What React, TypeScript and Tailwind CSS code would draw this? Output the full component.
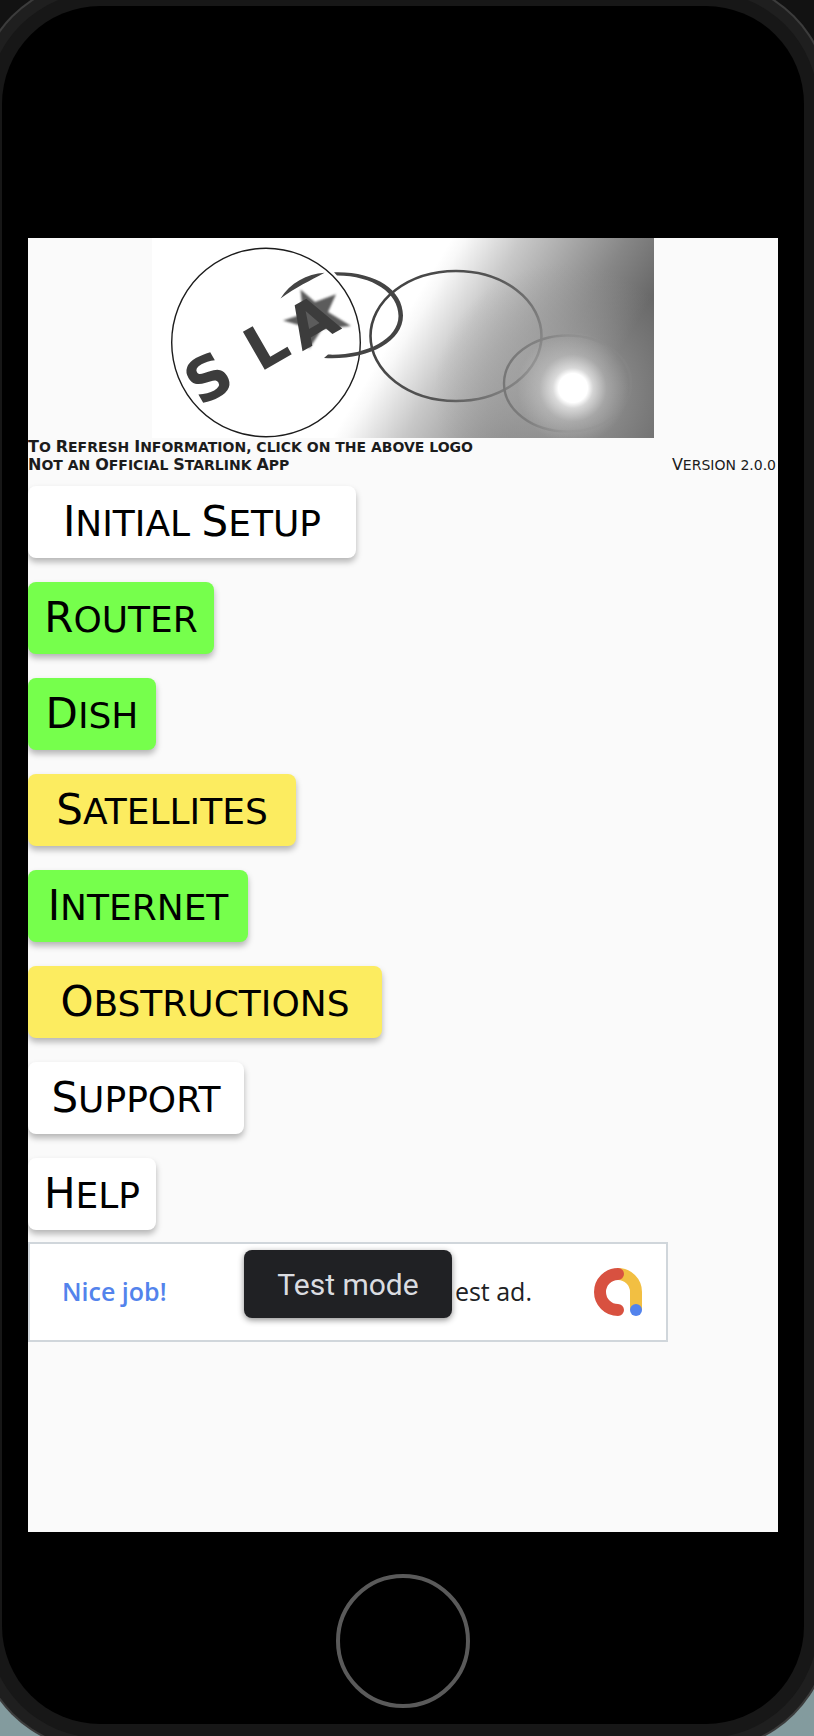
import React from "react";

type Tone = "white" | "green" | "yellow";

const tones: Record<Tone, string> = {
  white: "bg-white",
  green: "bg-[#76ff4c]",
  yellow: "bg-[#fcec60]",
};

const items: { label: string; tone: Tone; width: string }[] = [
  { label: "Initial Setup", tone: "white", width: "w-[328px]" },
  { label: "Router", tone: "green", width: "w-[186px]" },
  { label: "Dish", tone: "green", width: "w-32" },
  { label: "Satellites", tone: "yellow", width: "w-[268px]" },
  { label: "Internet", tone: "green", width: "w-[220px]" },
  { label: "Obstructions", tone: "yellow", width: "w-[354px]" },
  { label: "Support", tone: "white", width: "w-[216px]" },
  { label: "Help", tone: "white", width: "w-32" },
];

/* Capitals throughout, the first letter of each capitalised word a step larger. */
function Caps({ text, size }: { text: string; size: "sm" | "lg" }) {
  const initial = size === "lg" ? "first-letter:text-[42px]" : "first-letter:text-[16px]";
  return (
    <>
      {text.split(" ").map((word, i) => (
        <React.Fragment key={i}>
          {i > 0 && " "}
          <span className={`inline-block uppercase ${/^[A-Z]/.test(word) ? initial : ""}`}>
            {word}
          </span>
        </React.Fragment>
      ))}
    </>
  );
}

function Logo() {
  return (
    <svg viewBox="0 0 502 200" className="block h-[200px] w-[502px] max-w-full" aria-hidden="true">
      <defs>
        <linearGradient id="sky" gradientUnits="userSpaceOnUse" x1="300" y1="0" x2="473" y2="104">
          <stop offset="0" stopColor="#fff" />
          <stop offset="0.06" stopColor="#f8f8f8" />
          <stop offset="0.3" stopColor="#c8c8c8" />
          <stop offset="0.55" stopColor="#a3a3a3" />
          <stop offset="0.75" stopColor="#868686" />
          <stop offset="1" stopColor="#686868" />
        </linearGradient>
        <radialGradient id="haze" gradientUnits="userSpaceOnUse" cx="412" cy="155" r="130">
          <stop offset="0" stopColor="#b4b4b4" stopOpacity="0.8" />
          <stop offset="0.45" stopColor="#a6a6a6" stopOpacity="0.5" />
          <stop offset="1" stopColor="#9a9a9a" stopOpacity="0" />
        </radialGradient>
        <radialGradient id="sun" gradientUnits="userSpaceOnUse" cx="421" cy="150" r="56">
          <stop offset="0" stopColor="#fff" />
          <stop offset="0.26" stopColor="#fff" />
          <stop offset="0.36" stopColor="#fff" stopOpacity="0.6" />
          <stop offset="0.6" stopColor="#fff" stopOpacity="0.2" />
          <stop offset="1" stopColor="#fff" stopOpacity="0" />
        </radialGradient>
        <linearGradient id="orbitA" gradientUnits="userSpaceOnUse" x1="218" y1="60" x2="390" y2="140">
          <stop offset="0" stopColor="#404040" />
          <stop offset="0.55" stopColor="#555" />
          <stop offset="1" stopColor="#929292" />
        </linearGradient>
        <linearGradient id="orbitB" gradientUnits="userSpaceOnUse" x1="351" y1="0" x2="480" y2="0">
          <stop offset="0" stopColor="#767676" />
          <stop offset="0.5" stopColor="#8c8c8c" />
          <stop offset="1" stopColor="#868686" stopOpacity="0.5" />
        </linearGradient>
        <filter id="soft" x="-10%" y="-10%" width="120%" height="120%">
          <feGaussianBlur stdDeviation="0.9" />
        </filter>
      </defs>
      <rect width="502" height="200" fill="url(#sky)" />
      <rect width="502" height="200" fill="url(#haze)" />
      <ellipse cx="304" cy="98" rx="85.500" ry="65" fill="none" stroke="url(#orbitA)" strokeWidth="2.6" />
      <ellipse cx="415.500" cy="145.500" rx="63.500" ry="48" fill="none" stroke="url(#orbitB)" strokeWidth="2.4" />
      <circle cx="421" cy="150" r="56" fill="url(#sun)" />
      <circle cx="114" cy="104.500" r="94.300" fill="#fff" stroke="#1c1c1c" strokeWidth="1.400" />
      <path d="M182 34.200C222 33 251 51 251 77.500C251 105 214 122.500 172 120L176 116.600C212 118 246.500 102 246.500 78C246.500 55 221 37.500 185 37.400Z" fill="#444" />
      <path d="M128.500 60.500C138 45 155 36 172.500 34.800C158 43 144 49 128.500 60.500Z" fill="#444" />
      <path
        d="M148.500 51.500L163 64L184 56.300L176 74L199 88L170 91L157 111L150 88L131 82.500L151 76Z"
        fill="#5c5c5c"
        filter="url(#soft)"
      />
      <g
        transform="rotate(-30 50 168)"
        fill="#3c3c3c"
        fontFamily="DejaVu Sans, sans-serif"
        fontWeight="700"
        fontSize="60"
      >
        <text x="48" y="168">S</text>
        <text x="117" y="168">L</text>
        <text x="164" y="171">A</text>
      </g>
    </svg>
  );
}

function AdMark() {
  return (
    <svg viewBox="0 0 48 48" className="size-12" fill="none" strokeWidth="12" aria-hidden="true">
      <path d="M24 6A18 18 0 0 1 42 24V42" stroke="#f2bf42" />
      <path d="M24 6A18 18 0 0 0 24 42" stroke="#d85140" strokeLinecap="round" />
      <circle cx="42" cy="42" r="6" fill="#5383ec" stroke="none" />
    </svg>
  );
}

export default function App() {
  return (
    <div className="flex min-h-screen overflow-hidden bg-linear-to-b from-[#121212] from-50% to-[#839b9e] to-95% pt-[6px] pr-[10px] pb-[12px] pl-[2px]">
      <div className="flex flex-1 flex-col rounded-[98px] bg-black px-[26px] pt-[232px] shadow-[0_0_0_14px_#171717,0_0_0_25px_#1f1f1f,0_0_0_27px_#3c3c3c]">
        <main className="flex flex-1 flex-col items-start bg-[#fafafa] font-['DejaVu_Sans',sans-serif]">
          <button type="button" aria-label="Refresh information" className="block self-center">
            <Logo />
          </button>
          <div className="flex w-full items-end justify-between text-[14px] leading-[18px] text-[#1c1c1c]">
            <div className="font-bold">
              <p className="h-[18px]">
                <Caps size="sm" text="To Refresh Information, click on the above logo" />
              </p>
              <p className="h-[18px]">
                <Caps size="sm" text="Not an Official Starlink App" />
              </p>
            </div>
            <p className="h-[18px] pr-[2px]">
              <Caps size="sm" text="Version 2.0.0" />
            </p>
          </div>
          <nav className="mt-3 flex flex-col items-start gap-6">
            {items.map((item) => (
              <button
                key={item.label}
                type="button"
                className={`h-[72px] whitespace-nowrap rounded-lg text-center text-[36px] leading-[72px] text-black shadow-[0_4px_6px_rgba(0,0,0,0.28)] ${item.width} ${tones[item.tone]}`}
              >
                <Caps size="lg" text={item.label} />
              </button>
            ))}
          </nav>
          <aside className="relative mt-3 flex h-[100px] w-[640px] max-w-full items-center justify-between border-2 border-[#d0d6db] bg-white pr-6 pl-8 font-['Open_Sans',sans-serif] text-[25px]">
            <span className="font-semibold text-[#5383ec]">Nice job!</span>
            <span className="flex items-center gap-[62px] text-[#202124]">
              est ad.
              <AdMark />
            </span>
            <div
              role="status"
              className="absolute top-[6px] left-[214px] flex h-[68px] w-[208px] items-center justify-center rounded-lg bg-[#202124] font-[Roboto,sans-serif] text-[30px] text-[#dadce0] shadow-[0_2px_6px_rgba(0,0,0,0.45)]"
            >
              Test mode
            </div>
          </aside>
        </main>
        <footer className="flex h-[192px] items-start justify-center pt-[42px]">
          <button
            type="button"
            aria-label="Home"
            className="size-[134px] rounded-full border-4 border-[#5a5a5a]"
          />
        </footer>
      </div>
    </div>
  );
}
